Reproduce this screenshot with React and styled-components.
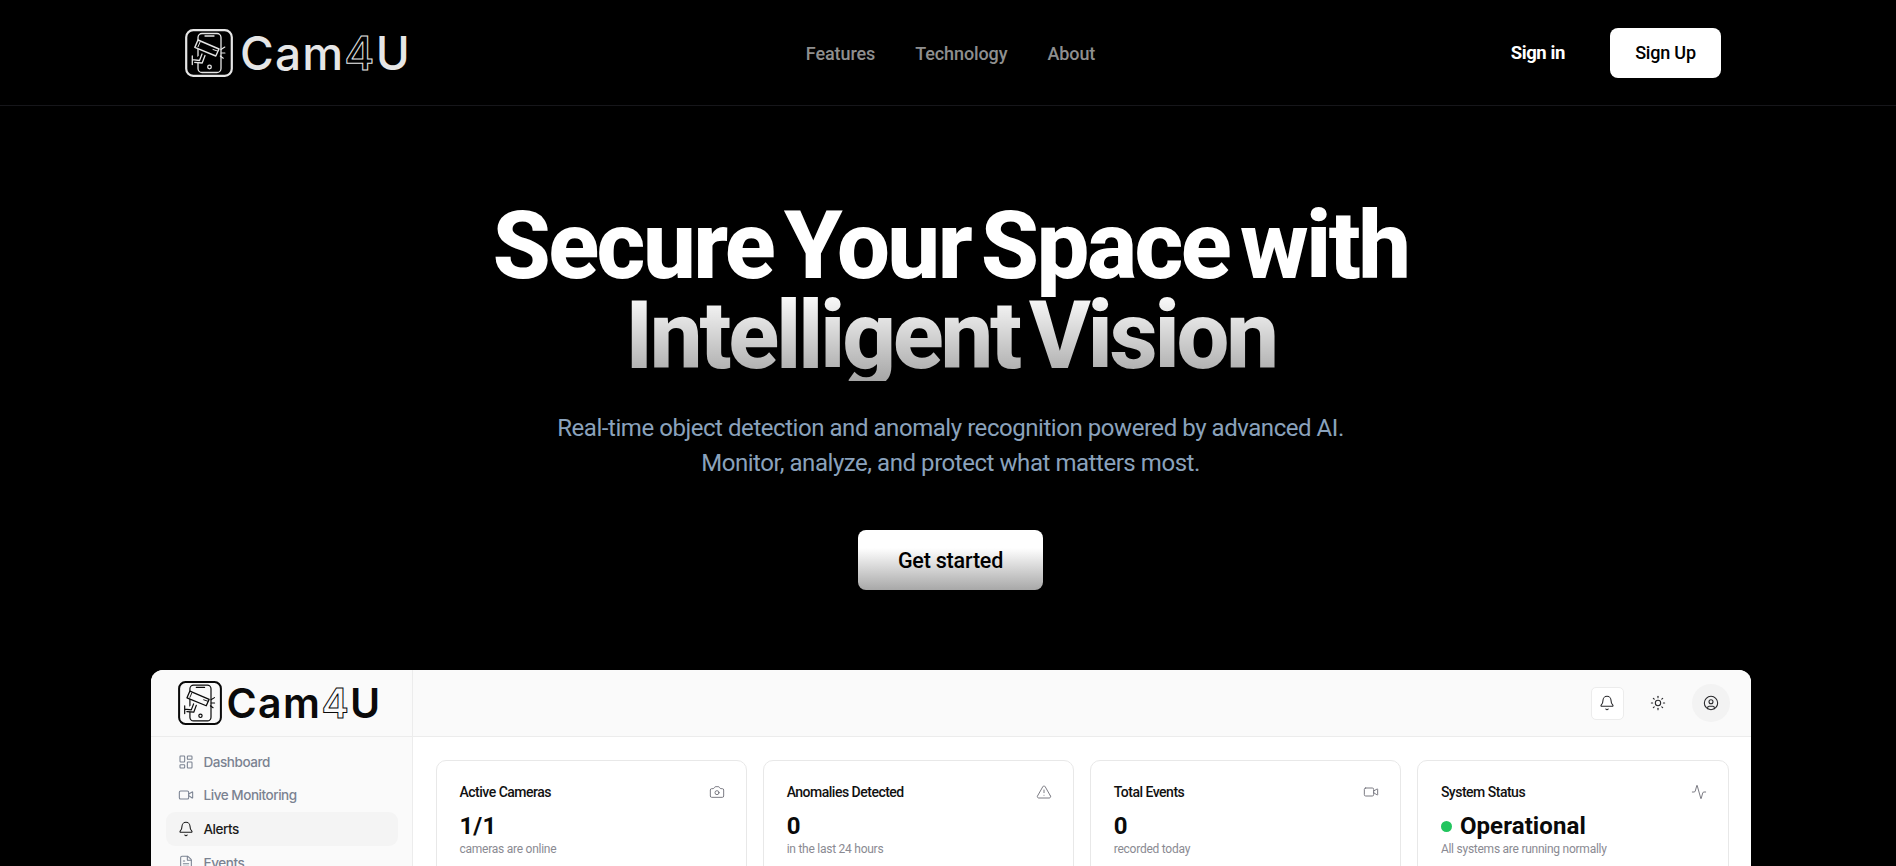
import React from "react";
import styled, { createGlobalStyle } from "styled-components";
import { LayoutDashboard, Video, Bell, FileText, Camera, TriangleAlert, Activity, Sun, CircleUser } from "lucide-react";

const Global = createGlobalStyle`
  html, body { margin: 0; padding: 0; background: #000; height: 866px; overflow: hidden; }
  body { font-family: Roboto, "Liberation Sans", sans-serif; }
  * { box-sizing: border-box; }
`;

const Page = styled.div`
  width: 1896px;
  height: 866px;
  overflow: hidden;
  background: #000;
  color: #fff;
`;

const Header = styled.header`
  height: 106px;
  border-bottom: 1px solid #16161a;
  padding: 0 175px 0 180px;
  display: grid;
  grid-template-columns: 1fr auto 1fr;
  align-items: center;
`;

const LogoWrap = styled.div`
  display: flex;
  align-items: center;
  gap: ${(p) => p.$gap}px;
  color: ${(p) => p.$color};
  margin-left: ${(p) => p.$offset}px;
`;

const LogoText = styled.span`
  font-family: Inter, sans-serif;
  font-weight: ${(p) => p.$weight};
  font-size: ${(p) => p.$size}px;
  line-height: 1;
  letter-spacing: ${(p) => p.$track}px;
`;

const OutlineFour = styled.span`
  color: transparent;
  -webkit-text-stroke: 1px ${(p) => p.$color};
`;

const Nav = styled.nav`
  display: flex;
  gap: 40px;
`;

const NavLink = styled.a`
  font-size: 18px;
  font-weight: 500;
  letter-spacing: -0.1px;
  line-height: 22px;
  margin-top: 2px;
  color: #8f8f8f;
`;

const Actions = styled.div`
  display: flex;
  justify-content: flex-end;
  align-items: center;
  gap: 45px;
`;

const SignIn = styled.a`
  font-size: 18.5px;
  font-weight: 700;
  letter-spacing: -0.4px;
  color: #fff;
`;

const SignUp = styled.button`
  width: 111px;
  height: 50px;
  border: 0;
  border-radius: 8px;
  background: #fff;
  color: #000;
  font-family: inherit;
  font-size: 18px;
  font-weight: 500;
  letter-spacing: -0.2px;
`;

const Hero = styled.section`
  padding: 95px 0 0 5px;
  display: flex;
  flex-direction: column;
  align-items: center;
`;

const Title = styled.h1`
  margin: 0;
  font-size: 94px;
  line-height: 90px;
  font-weight: 800;
  letter-spacing: -2.6px;
  word-spacing: -10px;
  text-align: center;
`;

const TitleLine = styled.span`
  display: block;
`;

const GradientLine = styled(TitleLine)`
  letter-spacing: -3.3px;
  background: linear-gradient(180deg, #ffffff 0%, #a6a6a6 100%);
  -webkit-background-clip: text;
  background-clip: text;
  color: transparent;
`;

const Sub = styled.p`
  margin: 30px 0 0;
  font-size: 24px;
  line-height: 35px;
  font-weight: 400;
  letter-spacing: -0.45px;
  color: #8aa2bc;
  text-align: center;
`;

const Cta = styled.button`
  margin-top: 49px;
  width: 185px;
  height: 60px;
  border: 0;
  border-radius: 8px;
  background: linear-gradient(180deg, #ffffff 30%, #a8a8a8 100%);
  color: #000;
  font-family: inherit;
  font-size: 21.5px;
  font-weight: 500;
  letter-spacing: -0.2px;
`;

const Dashboard = styled.div`
  margin-top: 80px;
  width: 1600px;
  min-height: 300px;
  border-radius: 12px 12px 0 0;
  background: #fff;
  color: #0a0a0a;
  display: grid;
  grid-template-columns: 262px 1fr;
  flex-shrink: 0;
`;

const Sidebar = styled.aside`
  background: #fafafa;
  border-right: 1px solid #ececec;
  border-radius: 12px 0 0 0;
`;

const SideTop = styled.div`
  height: 67px;
  border-bottom: 1px solid #ececec;
  padding: 0 0 0 27px;
  display: flex;
  align-items: center;
`;

const SideNav = styled.nav`
  padding: 8px 14px 8px 15px;
  display: flex;
  flex-direction: column;
`;

const SideItem = styled.a`
  height: 33.6px;
  padding-left: 12px;
  display: flex;
  align-items: center;
  gap: 10px;
  border-radius: 9px;
  font-family: Inter, sans-serif;
  font-size: 13.5px;
  font-weight: 500;
  letter-spacing: -0.45px;
  color: ${(p) => (p.$active ? "#1a1a1a" : "#7a8291")};
  background: ${(p) => (p.$active ? "#f4f4f4" : "transparent")};
`;

const Main = styled.main`
  min-width: 0;
`;

const TopBar = styled.div`
  height: 67px;
  background: #fafafa;
  border-bottom: 1px solid #ececec;
  border-radius: 0 12px 0 0;
  padding: 0 21px 0 0;
  display: flex;
  justify-content: flex-end;
  align-items: center;
`;

const BellBtn = styled.div`
  width: 33px;
  height: 33px;
  border: 1px solid #ececec;
  border-radius: 5px;
  background: #fff;
  display: flex;
  align-items: center;
  justify-content: center;
  color: #27272a;
`;

const SunBtn = styled.div`
  width: 33px;
  margin: 0 17px 0 18px;
  display: flex;
  justify-content: center;
  color: #27272a;
`;

const Avatar = styled.div`
  width: 38px;
  height: 38px;
  border-radius: 50%;
  background: #f3f3f3;
  display: flex;
  align-items: center;
  justify-content: center;
  color: #27272a;
`;

const Cards = styled.div`
  padding: 23px 22px 23px 23px;
  display: grid;
  grid-template-columns: repeat(4, 1fr);
  gap: 15.5px;
`;

const Card = styled.div`
  border: 1px solid #e8e8e8;
  border-radius: 10px;
  padding: 22px 21px 24px 23px;
`;

const CardHead = styled.div`
  display: flex;
  justify-content: space-between;
  align-items: center;
  height: 18px;
  color: #71717a;
`;

const CardTitle = styled.span`
  font-size: 14px;
  font-weight: 500;
  letter-spacing: -0.5px;
  color: #111;
`;

const CardValue = styled.div`
  margin-top: 11px;
  font-size: 24px;
  line-height: 28px;
  font-weight: 700;
  letter-spacing: 0.1px;
  color: #0a0a0a;
  display: flex;
  align-items: center;
  gap: 8px;
`;

const Dot = styled.span`
  width: 11px;
  height: 11px;
  border-radius: 50%;
  background: #22c55e;
`;

const CardSub = styled.div`
  margin-top: 1px;
  font-size: 12px;
  line-height: 16px;
  letter-spacing: -0.25px;
  color: #8a8a92;
`;

const LogoIcon = ({ size, color, bg }) => (
  <svg width={size} height={size} viewBox="0 0 48 48" fill="none" stroke={color} strokeLinecap="round" strokeLinejoin="round">
    <rect x="1.2" y="1.2" width="45.6" height="45.6" rx="7" strokeWidth="2.2" />
    <rect x="13" y="4.5" width="23" height="39" rx="4" strokeWidth="1.3" />
    <path d="M20 7h9" strokeWidth="1.3" />
    <circle cx="24.5" cy="38" r="1.8" strokeWidth="1.3" />
    <path d="M13 11l21 9-3.2 7-21-8.6z" fill={bg} strokeWidth="1.4" />
    <path d="M15 13.2l-2 4.6M28 20.5l4.6 1.6" strokeWidth="1" />
    <path d="M17 25l-2.5 6.5-7-.8M20 26.5l-2.8 7.5-7.5-.6M7.3 27v8.5" fill={bg} strokeWidth="1.3" />
    <path d="M36 20.5l3.8-2.4M36.3 24h3.6M35.3 27l3 2.2" strokeWidth="1.2" />
  </svg>
);

const Logo = ({ icon, size, track, gap, color, bg, offset, weight }) => (
  <LogoWrap $gap={gap} $color={color} $offset={offset}>
    <LogoIcon size={icon} color={color} bg={bg} />
    <LogoText $size={size} $track={track} $weight={weight}>
      Cam<OutlineFour $color={color}>4</OutlineFour>U
    </LogoText>
  </LogoWrap>
);

const sideItems = [
  { label: "Dashboard", Icon: LayoutDashboard },
  { label: "Live Monitoring", Icon: Video },
  { label: "Alerts", Icon: Bell, active: true },
  { label: "Events", Icon: FileText },
];

const cards = [
  { title: "Active Cameras", Icon: Camera, value: "1/1", sub: "cameras are online" },
  { title: "Anomalies Detected", Icon: TriangleAlert, value: "0", sub: "in the last 24 hours" },
  { title: "Total Events", Icon: Video, value: "0", sub: "recorded today" },
  { title: "System Status", Icon: Activity, value: "Operational", sub: "All systems are running normally", dot: true },
];

export default function App() {
  return (
    <Page>
      <Global />
      <Header>
        <Logo icon={48} size={46} track={1.2} gap={7} color="#e6e6e6" bg="#000" offset={5} weight={500} />
        <Nav>
          <NavLink>Features</NavLink>
          <NavLink>Technology</NavLink>
          <NavLink>About</NavLink>
        </Nav>
        <Actions>
          <SignIn>Sign in</SignIn>
          <SignUp>Sign Up</SignUp>
        </Actions>
      </Header>
      <Hero>
        <Title>
          <TitleLine>Secure Your Space with</TitleLine>
          <GradientLine>Intelligent Vision</GradientLine>
        </Title>
        <Sub>
          Real-time object detection and anomaly recognition powered by advanced AI.
          <br />
          Monitor, analyze, and protect what matters most.
        </Sub>
        <Cta>Get started</Cta>
        <Dashboard>
          <Sidebar>
            <SideTop>
              <Logo icon={44} size={41} track={1.4} gap={5} color="#0a0a0a" bg="#fafafa" offset={0} weight={600} />
            </SideTop>
            <SideNav>
              {sideItems.map(({ label, Icon, active }) => (
                <SideItem key={label} $active={active}>
                  <Icon size={16} strokeWidth={1.6} />
                  {label}
                </SideItem>
              ))}
            </SideNav>
          </Sidebar>
          <Main>
            <TopBar>
              <BellBtn><Bell size={16} strokeWidth={1.6} /></BellBtn>
              <SunBtn><Sun size={16} strokeWidth={1.6} /></SunBtn>
              <Avatar><CircleUser size={16} strokeWidth={1.6} /></Avatar>
            </TopBar>
            <Cards>
              {cards.map(({ title, Icon, value, sub, dot }) => (
                <Card key={title}>
                  <CardHead>
                    <CardTitle>{title}</CardTitle>
                    <Icon size={16} strokeWidth={1.4} />
                  </CardHead>
                  <CardValue>
                    {dot && <Dot />}
                    {value}
                  </CardValue>
                  <CardSub>{sub}</CardSub>
                </Card>
              ))}
            </Cards>
          </Main>
        </Dashboard>
      </Hero>
    </Page>
  );
}
